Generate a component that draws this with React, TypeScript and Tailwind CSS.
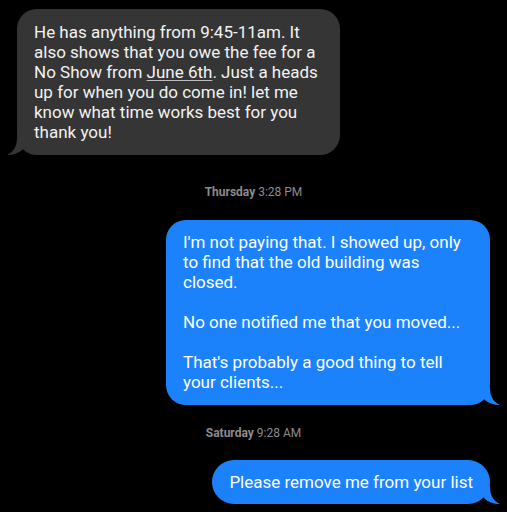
import React from "react";

function TailLeft({ color }: { color: string }) {
  return (
    <svg className="absolute bottom-0 left-[-10px]" width="20" height="18" viewBox="0 0 20 18">
      <path d="M10 0 C10 8 8 14 0 18 C6 18 12 16 16 12 L16 0 Z" fill={color} />
    </svg>
  );
}

function TailRight({ color }: { color: string }) {
  return (
    <svg className="absolute bottom-0 right-[-10px]" width="20" height="18" viewBox="0 0 20 18">
      <path d="M10 0 C10 8 12 14 20 18 C14 18 8 16 4 12 L4 0 Z" fill={color} />
    </svg>
  );
}

function Stamp({ day, time }: { day: string; time: string }) {
  return (
    <div className="flex justify-center text-[12px] leading-[14px] text-[#8c8c8c]">
      <span className="font-bold">{day}</span>
      <span>&nbsp;{time}</span>
    </div>
  );
}

export default function App() {
  return (
    <div
      className="w-[507px] h-[512px] bg-black overflow-hidden flex flex-col"
      style={{ fontFamily: "Roboto, 'Noto Sans', sans-serif" }}
    >
      <div className="relative ml-[17px] mt-[9px] w-[323px] rounded-[20px] bg-[#353535] pl-[17px] pr-[10px] pt-[13px] pb-[13px] text-[17px] leading-[20px] text-[#f2f2f2]">
        He has anything from 9:45-11am. It also shows that you owe the fee for a No Show from{" "}
        <span className="underline decoration-[#bdbdbd] underline-offset-2">June 6th</span>. Just a heads up for when you do come in! let me know what time works best for you thank you!
        <TailLeft color="#353535" />
      </div>

      <div className="mt-[30px]">
        <Stamp day="Thursday" time="3:28 PM" />
      </div>

      <div className="relative self-end mr-[17px] mt-[21px] w-[324px] rounded-[20px] bg-[#1b82fb] pl-[17px] pr-[28px] pt-[12px] pb-[13px] text-[17px] leading-[20px] text-white">
        <p>I'm not paying that. I showed up, only to find that the old building was closed.</p>
        <p className="mt-[20px]">No one notified me that you moved...</p>
        <p className="mt-[20px]">That's probably a good thing to tell your clients...</p>
        <TailRight color="#1b82fb" />
      </div>

      <div className="mt-[21px]">
        <Stamp day="Saturday" time="9:28 AM" />
      </div>

      <div className="relative self-end mr-[17px] mt-[20px] rounded-[22px] bg-[#1b82fb] pl-[17px] pr-[17px] py-[12px] text-[17px] leading-[20px] text-white">
        Please remove me from your list
        <TailRight color="#1b82fb" />
      </div>
    </div>
  );
}
